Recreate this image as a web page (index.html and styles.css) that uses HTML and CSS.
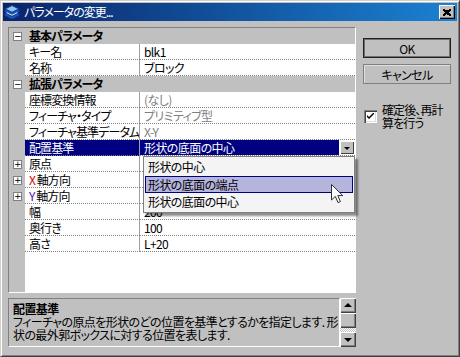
FILE: index.html
```html
<!DOCTYPE html>
<html lang="ja">
<head>
    <meta charset="UTF-8">
    <title>パラメータの変更...</title>
    <link rel="stylesheet" href="styles.css">
</head>
<body>
    <div class="window">
        <div class="titlebar">
            <svg class="appicon" width="16" height="16" viewBox="0 0 16 16">
                <path d="M1 5 L8 1.5 L15 5 L8 8.5 Z" fill="#8fc3f0" stroke="#0c3c96"/>
                <path d="M1 5 L1 7.5 L8 11 L15 7.5 L15 5 L8 8.5 Z" fill="#1c5cc4" stroke="#0c3c96"/>
                <path d="M1 9 L1 11.5 L8 15 L15 11.5 L15 9 L8 12.5 Z" fill="#1c5cc4" stroke="#0c3c96"/>
                <path d="M2.5 8.6 L8 11.3 L13.5 8.6" fill="none" stroke="#e8f2ff" stroke-width="1"/>
            </svg>
            <span class="title">パラメータの変更...</span>
            <div class="close">
                <svg width="8" height="7" viewBox="0 0 8 7">
                    <path d="M0 0 L8 7 M1 0 L8 6 M0 1 L7 7 M8 0 L0 7 M7 0 L0 6 M8 1 L1 7" stroke="#000" stroke-width="1" shape-rendering="crispEdges"/>
                </svg>
            </div>
        </div>

        <div class="main">
            <div class="leftcol">
                <div class="grid">
                    <div class="row cat"><span class="gut"><i class="box">&minus;</i></span><span class="catname">基本パラメータ</span></div>
                    <div class="row"><span class="gut"></span><span class="name">キー名</span><span class="val">blk1</span></div>
                    <div class="row"><span class="gut"></span><span class="name">名称</span><span class="val">ブロック</span></div>
                    <div class="row cat"><span class="gut"><i class="box">&minus;</i></span><span class="catname">拡張パラメータ</span></div>
                    <div class="row"><span class="gut"></span><span class="name">座標変換情報</span><span class="val dim">(なし)</span></div>
                    <div class="row"><span class="gut"></span><span class="name">フィーチャ・タイプ</span><span class="val dim">プリミティブ型</span></div>
                    <div class="row"><span class="gut"></span><span class="name">フィーチャ基準データム</span><span class="val dim">X-Y</span></div>
                    <div class="row sel"><span class="gut"></span><span class="name">配置基準</span><span class="val"><span class="seltext">形状の底面の中心</span><span class="ddbtn"></span></span></div>
                    <div class="row"><span class="gut"><i class="box plus">+</i></span><span class="name">原点</span><span class="val"></span></div>
                    <div class="row"><span class="gut"><i class="box plus">+</i></span><span class="name"><em class="ax-x">X</em>&nbsp;軸方向</span><span class="val"></span></div>
                    <div class="row"><span class="gut"><i class="box plus">+</i></span><span class="name"><em class="ax-y">Y</em>&nbsp;軸方向</span><span class="val"></span></div>
                    <div class="row"><span class="gut"></span><span class="name">幅</span><span class="val">200</span></div>
                    <div class="row"><span class="gut"></span><span class="name">奥行き</span><span class="val">100</span></div>
                    <div class="row"><span class="gut"></span><span class="name">高さ</span><span class="val">L+20</span></div>

                    <div class="popup">
                        <div class="opt">形状の中心</div>
                        <div class="opt hi">形状の底面の端点</div>
                        <div class="opt">形状の底面の中心</div>
                    </div>
                    <svg class="cursor" width="13" height="20" viewBox="0 0 13 20">
                        <path d="M0.5 0.5 L0.5 16 L4.3 12.4 L7 18.6 L9.4 17.6 L6.8 11.6 L11.8 11.6 Z" fill="#fff" stroke="#303030" stroke-width="1"/>
                    </svg>
                </div>

                <div class="descwrap">
                    <div class="desc">
                        <b>配置基準</b><br>
                        フィーチャの原点を形状のどの位置を基準とするかを指定します. 形<br>
                        状の最外郭ボックスに対する位置を表します.
                    </div>
                    <div class="vscroll">
                        <div class="sbtn"><i class="tri up"></i></div>
                        <div class="sbtn thumb"></div>
                        <div class="track"></div>
                        <div class="sbtn"><i class="tri"></i></div>
                    </div>
                </div>
            </div>

            <div class="rightcol">
                <button class="btn default">OK</button>
                <button class="btn">キャンセル</button>
                <div class="check">
                    <span class="cbox">
                        <svg width="7" height="7" viewBox="0 0 7 7">
                            <path d="M0 2 L0 4 L2 6 L7 1 L7 -1 L2 4 Z" fill="#000"/>
                        </svg>
                    </span>
                    <span>確定後、再計<br>算を行う</span>
                </div>
            </div>
        </div>
    </div>
</body>
</html>
```

FILE: styles.css
```css
*{
    margin: 0;
    padding: 0;
    box-sizing: border-box;
}
body{
    font-family: "Noto Sans CJK JP", "Noto Sans", sans-serif;
    font-size: 12px;
    font-feature-settings: "palt";
    letter-spacing: -0.6px;
    background-color: #c0c0c0;
    color: #000;
}
.window{
    width: 460px;
    height: 357px;
    background-color: #c0c0c0;
    border: 1px solid;
    border-color: #d4d0c8 #404040 #404040 #d4d0c8;
    box-shadow: inset 1px 1px #fff, inset -1px -1px #808080;
    padding: 2px;
    display: flex;
    flex-direction: column;
}

/* title bar */
.titlebar{
    height: 18px;
    flex: none;
    background: linear-gradient(to right, #0a246a, #1a82d2);
    color: #fff;
    display: flex;
    align-items: center;
    padding-left: 1px;
    position: relative;
}
.appicon{
    flex: none;
}
.title{
    margin-left: 4px;
    line-height: 18px;
    letter-spacing: -1px;
}
.close{
    width: 16px;
    height: 14px;
    margin-left: auto;
    margin-right: 2px;
    background-color: #c0c0c0;
    box-shadow: inset 1px 1px #fff, inset -1px -1px #000, inset -2px -2px #808080;
    display: flex;
    justify-content: center;
    align-items: center;
}

/* layout */
.main{
    display: flex;
    gap: 7px;
    padding: 6px 0 0 5px;
}
.leftcol{
    width: 348px;
    display: flex;
    flex-direction: column;
    gap: 5px;
}
.rightcol{
    width: 88px;
    padding-top: 11px;
    display: flex;
    flex-direction: column;
    gap: 6px;
}

/* property grid */
.grid{
    height: 266px;
    border: 1px solid;
    border-color: #808080 #fff #fff #808080;
    background: linear-gradient(to right, #c0c0c0 16px, #fff 16px);
    position: relative;
}
.row{
    display: flex;
    height: 16px;
    line-height: 15px;
    white-space: nowrap;
}
.gut{
    width: 16px;
    flex: none;
    display: flex;
    align-items: center;
    padding-left: 4px;
}
.box{
    width: 9px;
    height: 9px;
    border: 1px solid #808080;
    background-color: #fff;
    font-style: normal;
    font-family: "DejaVu Sans", sans-serif;
    font-size: 9px;
    letter-spacing: 0;
    line-height: 7px;
    text-align: center;
    color: #000;
}
.name{
    width: 115px;
    flex: none;
    border-right: 1px solid #a0a0a0;
    border-bottom: 1px dotted #808080;
    padding-left: 4px;
    letter-spacing: -0.9px;
    overflow: hidden;
}
.val{
    flex: 1;
    border-bottom: 1px dotted #808080;
    padding-left: 4px;
    display: flex;
}
.dim{
    color: #808080;
}
.cat{
    background-color: #c0c0c0;
}
.catname{
    font-weight: bold;
    padding-left: 4px;
    letter-spacing: -0.9px;
}
.ax-x{
    font-style: normal;
    color: #d40000;
}
.ax-y{
    font-style: normal;
    color: #5010c0;
}
.sel .name{
    background-color: #000080;
    color: #fff;
}
.sel .val{
    padding-left: 0;
    padding-right: 1px;
}
.seltext{
    flex: 1;
    background-color: #000080;
    color: #fff;
    padding-left: 4px;
}
.ddbtn{
    width: 14px;
    height: 13px;
    margin-top: 1px;
    margin-left: 1px;
    background-color: #c0c0c0;
    box-shadow: inset 1px 1px #fff, inset -1px -1px #404040;
    position: relative;
}
.ddbtn::after{
    content: "";
    position: absolute;
    left: 4px;
    top: 6px;
    border-left: 3px solid transparent;
    border-right: 3px solid transparent;
    border-top: 3px solid #000;
}

/* dropdown list */
.popup{
    position: absolute;
    left: 134px;
    top: 128px;
    width: 212px;
    height: 57px;
    background-color: #f4f4f4;
    border: 1px solid #808080;
    padding: 1px;
    box-shadow: 3px 3px 2px rgba(0,0,0,0.45);
}
.opt{
    height: 17px;
    line-height: 17px;
    padding-left: 3px;
}
.opt:first-child{
    height: 18px;
}
.opt.hi{
    background-color: #b4b4dc;
    border: 1px solid #000080;
    line-height: 15px;
    padding-left: 2px;
}
.cursor{
    position: absolute;
    left: 322px;
    top: 156px;
}

/* description */
.descwrap{
    display: flex;
    height: 49px;
}
.desc{
    flex: 1;
    border: 1px solid;
    border-color: #808080 #fff #fff #808080;
    padding: 3px 4px;
    line-height: 13px;
    letter-spacing: -0.6px;
    white-space: nowrap;
    overflow: hidden;
}
.vscroll{
    width: 16px;
    display: flex;
    flex-direction: column;
}
.sbtn{
    height: 15px;
    flex: none;
    background-color: #c0c0c0;
    box-shadow: inset 1px 1px #fff, inset -1px -1px #404040, inset -2px -2px #808080;
    position: relative;
}
.track{
    flex: 1;
    background: repeating-conic-gradient(#fff 0 25%, #c0c0c0 0 50%) 0 0 / 2px 2px;
}
.tri{
    position: absolute;
    left: 4px;
    top: 6px;
    border-left: 4px solid transparent;
    border-right: 4px solid transparent;
    border-top: 4px solid #000;
}
.tri.up{
    top: 5px;
    border-top: none;
    border-bottom: 4px solid #000;
}

/* buttons */
.btn{
    height: 20px;
    font-family: inherit;
    font-size: 12px;
    font-feature-settings: "palt";
    letter-spacing: -0.6px;
    background-color: #c0c0c0;
    border: 1px solid #808080;
    box-shadow: inset 1px 1px #dfdfdf;
    color: #000;
}
.btn.default{
    border: 1px solid #202020;
    box-shadow: inset 0 0 0 1px #707070;
}
.check{
    display: flex;
    gap: 5px;
    margin-top: 13px;
    padding-left: 1px;
    line-height: 13px;
    letter-spacing: -0.9px;
}
.cbox{
    width: 13px;
    height: 13px;
    flex: none;
    margin-top: 7px;
    background-color: #fff;
    box-shadow: inset 1px 1px #808080, inset 2px 2px #404040, inset -1px -1px #fff, inset -2px -2px #dfdfdf;
    display: flex;
    justify-content: center;
    align-items: center;
}
```
